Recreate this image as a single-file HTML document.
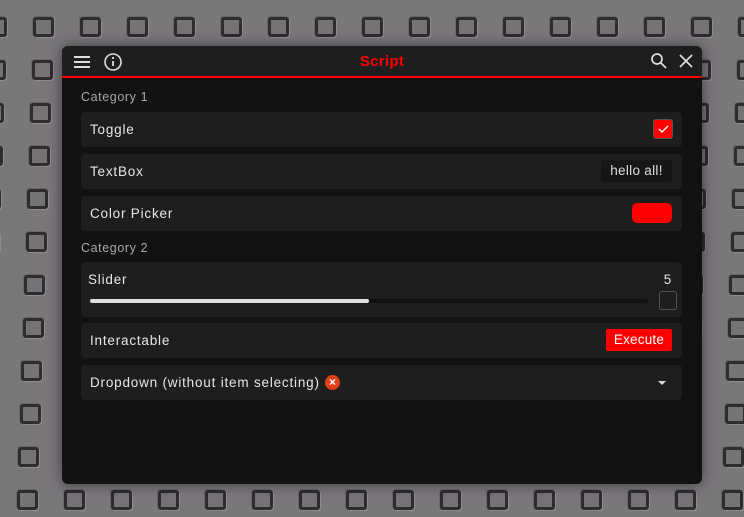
<!DOCTYPE html><html style="width:744px;height:517px;overflow:hidden"><head><style>
*{margin:0;padding:0;box-sizing:border-box}
body{width:744px;height:517px;overflow:hidden;font-family:"Liberation Sans",sans-serif;position:relative;background:#7a777b}
#sqs{position:absolute;inset:0;overflow:hidden}
.sq{position:absolute;width:21px;height:20px;border:3px solid #2e2c2f;border-radius:3px;background:#767377;box-shadow:1px 1px 0 #8f8c90,-1px -1px 0 #6a676b}
.win{position:absolute;left:62px;top:46px;width:640px;height:438px;background:#121212;border-radius:6px;overflow:hidden;box-shadow:0 0 14px rgba(0,0,0,.5)}
.hdr{height:32px;background:#1e1e1e;border-bottom:2px solid #ff0000;position:relative}
.title{position:absolute;left:0;right:0;top:7px;text-align:center;color:#ff0000;font-weight:bold;font-size:15px;letter-spacing:.3px}
.cat{position:absolute;left:19px;color:#a8a8a8;font-size:12.5px;letter-spacing:.6px}
.row{position:absolute;left:19px;width:601px;height:35px;background:#1e1e1e;border-radius:4px;color:#e6e6e6;font-size:13.5px;letter-spacing:.8px}
.row .l{position:absolute;left:9px;top:10px}
</style></head><body>
<div id="sqs"></div>
<script>
var h='';for(var r=-1;r<12;r++)for(var c=-1;c<17;c++){var x=c*47+33+r*-1.5,y=r*43+17;h+='<div class="sq" style="left:'+x+'px;top:'+y+'px"></div>';}
document.getElementById('sqs').innerHTML=h;
</script>
<div class="win">
<div class="hdr">
<svg style="position:absolute;left:11px;top:9px" width="18" height="14"><path d="M1 2h16M1 7h16M1 12h16" stroke="#ddd" stroke-width="2"/></svg>
<svg style="position:absolute;left:41px;top:6px" width="20" height="20"><circle cx="10" cy="10" r="8" fill="none" stroke="#ddd" stroke-width="1.6"/><path d="M10 9v5" stroke="#ddd" stroke-width="1.8"/><circle cx="10" cy="6" r="1.1" fill="#ddd"/></svg>
<div class="title">Script</div>
<svg style="position:absolute;left:588px;top:6px" width="18" height="18"><circle cx="7" cy="7" r="5" fill="none" stroke="#ddd" stroke-width="1.7"/><path d="M11 11l5 5" stroke="#ddd" stroke-width="1.8"/></svg>
<svg style="position:absolute;left:617px;top:8px" width="14" height="14"><path d="M1 1l12 12M13 1L1 13" stroke="#ddd" stroke-width="1.7"/></svg>
</div>
<div class="cat" style="top:44px">Category 1</div>
<div class="row" style="top:66px"><span class="l">Toggle</span>
<div style="position:absolute;right:9px;top:7px;width:20px;height:20px;background:#ff0000;border:1px solid #555;border-radius:3px"><svg width="18" height="18"><path d="M5 9l3 3 6-6" fill="none" stroke="#fff" stroke-width="1.4"/></svg></div></div>
<div class="row" style="top:108px"><span class="l">TextBox</span>
<div style="position:absolute;right:10px;top:6px;width:71px;height:22px;background:#161616;border-radius:3px;color:#ddd;font-size:13.5px;letter-spacing:.3px;text-align:center;line-height:22px">hello all!</div></div>
<div class="row" style="top:150px"><span class="l">Color Picker</span>
<div style="position:absolute;right:10px;top:7px;width:40px;height:20px;background:#ff0000;border-radius:5px"></div></div>
<div class="cat" style="top:195px">Category 2</div>
<div class="row" style="top:216px;height:55px"><span class="l" style="left:7px;top:10px">Slider</span>
<span style="position:absolute;right:10px;top:10px">5</span>
<div style="position:absolute;left:9px;top:37px;width:558px;height:4px;background:#121212;border-radius:2px"><div style="width:279px;height:4px;background:#ddd;border-radius:2px"></div></div>
<div style="position:absolute;right:5px;top:29px;width:18px;height:19px;border:1px solid #555;border-radius:3px"></div></div>
<div class="row" style="top:277px"><span class="l">Interactable</span>
<div style="position:absolute;right:10px;top:6px;width:66px;height:22px;background:#ff0000;border-radius:2px;color:#fff;font-size:13.5px;letter-spacing:.2px;text-align:center;line-height:22px">Execute</div></div>
<div class="row" style="top:319px"><span class="l" style="white-space:nowrap">Dropdown (without item selecting)</span>
<span style="position:absolute;left:244px;top:10px;width:15px;height:15px;background:#e0401a;border-radius:50%;color:#fff;font-size:12px;font-weight:bold;text-align:center;line-height:15px;letter-spacing:0">×</span>
<svg style="position:absolute;right:15px;top:15px" width="10" height="6"><path d="M1 1h8L5 5z" fill="#ddd"/></svg></div>
</div>
</body></html>
